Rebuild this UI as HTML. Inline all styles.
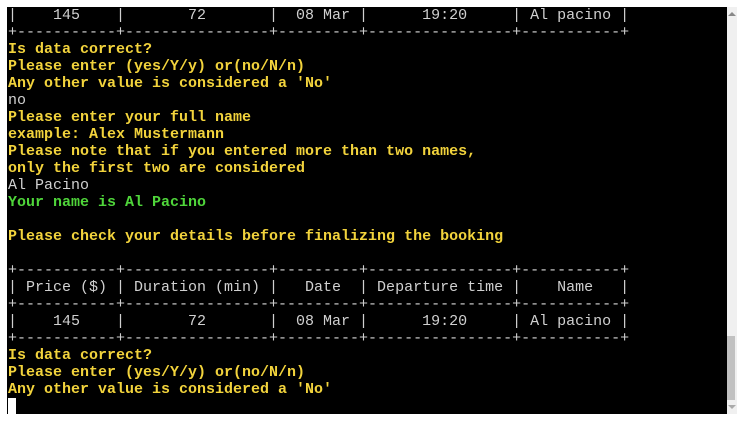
<!DOCTYPE html>
<html><head><meta charset="utf-8"><style>
html,body{margin:0;padding:0;background:#fff;width:743px;height:429px;overflow:hidden}
#term{position:absolute;left:7px;top:7px;width:720px;height:407px;background:#000}
pre{margin:0;position:absolute;left:1px;top:0;font-family:"Liberation Mono","Courier New",monospace;font-size:15px;line-height:17px;color:#d0d0d0;white-space:pre}
.y{color:#f2d33c;font-weight:bold}
.g{color:#4fd53a;font-weight:bold}
.cur{display:inline-block;width:8px;height:16px;background:#fff;vertical-align:-3px}
#sb{position:absolute;left:727px;top:7px;width:10px;height:407px;background:#f0f0f0}
#thumb{position:absolute;left:0;top:329px;width:8px;height:64px;background:#c1c1c1}
.up{position:absolute;left:1px;top:5px;width:0;height:0;border-left:4px solid transparent;border-right:4px solid transparent;border-bottom:4px solid #888}
.dn{position:absolute;left:1px;top:398px;width:0;height:0;border-left:4px solid transparent;border-right:4px solid transparent;border-top:4px solid #aaa}
</style></head><body>
<div id="term"><pre>|    145    |       72       |  08 Mar |      19:20     | Al pacino |
+-----------+----------------+---------+----------------+-----------+
<span class="y">Is data correct?
Please enter (yes/Y/y) or(no/N/n)
Any other value is considered a 'No'</span>
no
<span class="y">Please enter your full name
example: Alex Mustermann
Please note that if you entered more than two names,
only the first two are considered</span>
Al Pacino
<span class="g">Your name is Al Pacino</span>

<span class="y">Please check your details before finalizing the booking</span>

+-----------+----------------+---------+----------------+-----------+
| Price ($) | Duration (min) |   Date  | Departure time |    Name   |
+-----------+----------------+---------+----------------+-----------+
|    145    |       72       |  08 Mar |      19:20     | Al pacino |
+-----------+----------------+---------+----------------+-----------+
<span class="y">Is data correct?
Please enter (yes/Y/y) or(no/N/n)
Any other value is considered a 'No'</span>
<span class="cur"></span></pre></div>
<div id="sb"><div class="up"></div><div id="thumb"></div><div class="dn"></div></div>
</body></html>
